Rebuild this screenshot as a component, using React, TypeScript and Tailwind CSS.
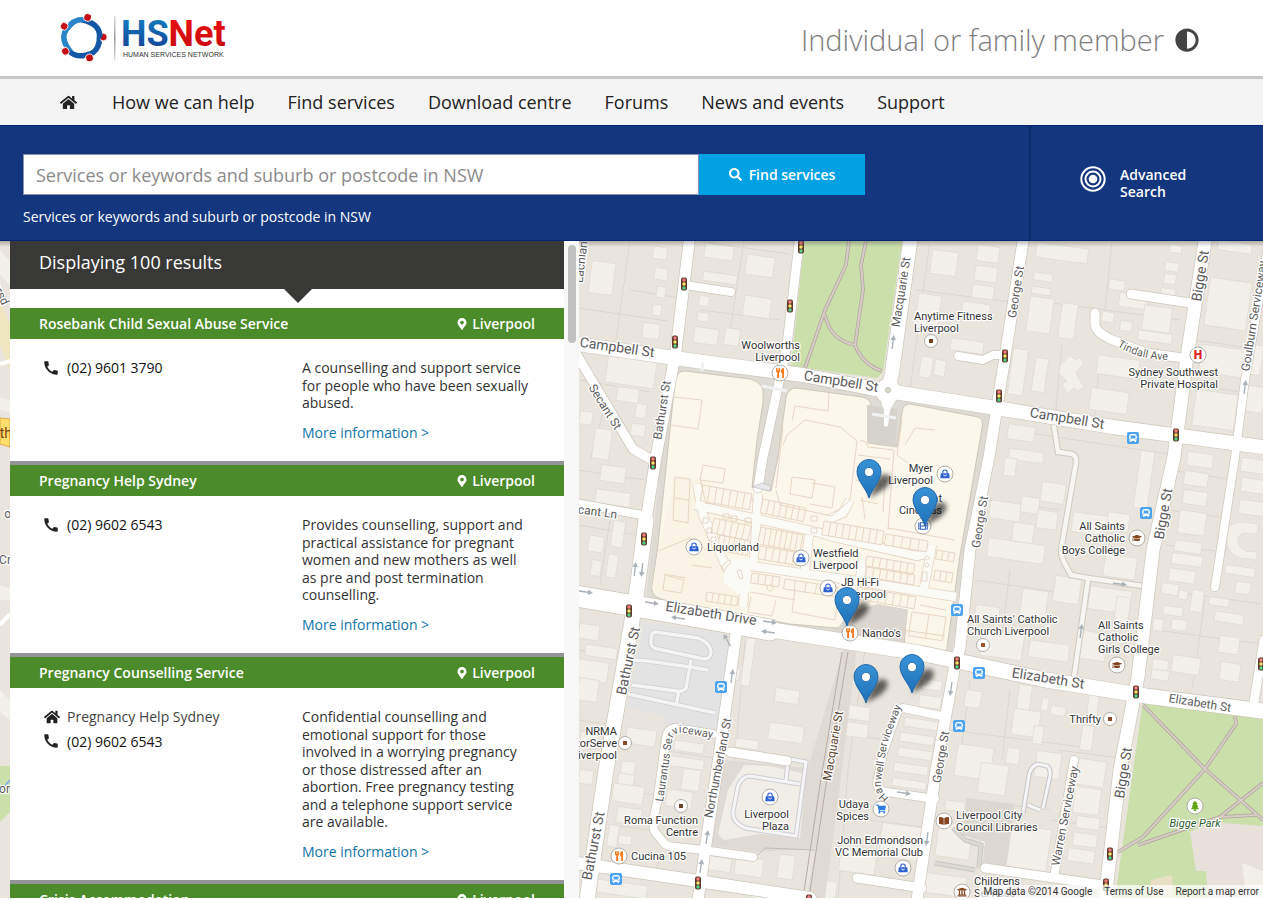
import React from "react";
import { FaAdjust, FaHome, FaMapMarkerAlt, FaSearch, FaUtensils, FaGraduationCap, FaShoppingCart, FaBookOpen, FaUniversity, FaTree, FaFilm, FaBus } from "react-icons/fa";
import { MdCall } from "react-icons/md";

/* ---------- map data ---------- */

type Road = { d: string; w: number };

const roads: Road[] = [
  { d: "M690 235 676 350 656 457 646 520", w: 11 },
  { d: "M646 520 638 583 631 627 606 770 587 900", w: 15 },
  { d: "M570 343 703 362 803 375 870 388 913 395 996 408 1113 427 1270 448", w: 14 },
  { d: "M800 235 787 345 763 457 758 488", w: 9 },
  { d: "M911 235 892 373 888 390", w: 14 },
  { d: "M1024 235 1005 357 989 457 970 550 960 647 954 670 936 770 917 900", w: 11 },
  { d: "M1206 235 1187 357 1174 457 1153 550 1138 677 1120 770 1105 900", w: 13 },
  { d: "M570 595 670 612 770 630", w: 21 },
  { d: "M765 629 920 653 1046 680 1146 696 1270 712", w: 15 },
  { d: "M574 350 633 449 652 460", w: 9 },
  { d: "M570 502 642 515", w: 8 },
  { d: "M737 628 730 677 717 770 707 837 698 900", w: 11 },
  { d: "M713 734 675 728Q667 729 666 738L657 803Q651 826 655 832L664 843Q667 847 677 847L703 850 753 857", w: 8 },
  { d: "M570 862 698 881 810 898", w: 12 },
  { d: "M730 752 787 761", w: 9 },
  { d: "M685 285 731 292", w: 8 },
  { d: "M1095 313V325Q1096 332 1110 339L1146 353 1183 358", w: 9 },
  { d: "M1131 294 1190 303", w: 9 },
  { d: "M958 356 983 360 993 355 1003 355", w: 8 },
  { d: "M1270 235 1245 380 1235 457 1215 587", w: 8 },
  { d: "M1264 640 1253 708", w: 9 },
  { d: "M1074 760 1055 872", w: 8 },
  { d: "M985 868 1103 885", w: 9 },
  { d: "M857 878 922 888", w: 9 },
  { d: "M941 716 903 708Q898 708 896 716L883 753 877 784Q878 791 887 792L935 799", w: 8 },
];

const lanes = [
  "M1053 420 1058 452 1072 454Q1077 456 1076 463L1061 550Q1061 556 1065 564L1071 575 1088 578 1150 587",
  "M1088 580 1074 677",
];

// centre x, centre y, width, height
const buildings: number[][] = [
  [602, 278, 24, 32], [660, 253, 14, 12], [661, 274, 13, 12], [661, 292, 9, 11], [657, 310, 9, 11], [651, 331, 17, 15],
  [719, 252, 29, 14], [720, 278, 34, 9], [760, 266, 28, 20], [757, 307, 27, 20], [704, 301, 10, 10], [703, 317, 11, 9], [706, 336, 24, 16], [732, 337, 15, 17],
  [631, 372, 49, 27], [628, 395, 22, 14], [641, 411, 11, 14], [638, 430, 14, 12], [586, 418, 13, 13], [602, 444, 17, 30],
  [613, 474, 25, 16], [613, 498, 35, 14], [618, 534, 12, 26], [596, 544, 15, 16], [596, 568, 10, 16], [612, 566, 10, 23],
  [944, 263, 26, 24], [988, 254, 22, 16], [986, 274, 22, 15], [983, 292, 22, 13], [976, 309, 28, 12], [928, 312, 23, 35], [967, 346, 33, 12], [926, 367, 12, 21], [940, 368, 11, 16],
  [1062, 253, 52, 15], [1043, 277, 19, 8], [1041, 291, 19, 7], [1040, 315, 24, 35], [1068, 321, 16, 35], [1018, 372, 15, 46], [1040, 375, 13, 34],
  [1117, 285, 16, 10], [1133, 301, 28, 14], [1157, 319, 28, 25], [1155, 337, 34, 10], [1108, 317, 12, 10], [1126, 326, 12, 10], [1118, 367, 42, 19], [1109, 401, 38, 22], [1172, 267, 14, 9], [1170, 279, 12, 10], [1168, 293, 15, 9], [1176, 249, 12, 8],
  [1228, 304, 42, 48], [1222, 361, 44, 28], [1215, 410, 42, 36], [1253, 399, 22, 26], [1255, 360, 14, 30], [1235, 247, 34, 10],
  [1021, 433, 27, 15], [1026, 456, 35, 11], [1010, 467, 12, 18], [1053, 493, 24, 20], [1005, 511, 31, 18], [1030, 505, 18, 16], [1047, 520, 20, 18], [1023, 533, 21, 19], [1016, 551, 57, 19], [1144, 480, 14, 58], [1090, 524, 36, 20], [1118, 522, 22, 18], [1120, 567, 32, 22],
  [1200, 460, 26, 14], [1196, 479, 24, 14], [1195, 498, 24, 14], [1192, 523, 27, 23], [1188, 547, 27, 11], [1187, 560, 31, 11], [1182, 576, 27, 13], [1254, 466, 26, 14], [1254, 486, 26, 14], [1252, 508, 26, 14], [1240, 571, 30, 9], [1243, 588, 15, 12],
  [1067, 590, 26, 26], [1110, 600, 42, 23], [1122, 612, 14, 30], [1034, 604, 26, 28], [987, 615, 24, 18], [1002, 645, 42, 26], [1049, 651, 40, 17], [1093, 646, 27, 28], [1170, 589, 17, 11], [1183, 595, 9, 9], [1197, 601, 12, 22], [1173, 611, 20, 9], [1179, 625, 15, 11], [1219, 602, 20, 8], [1229, 618, 29, 10], [1229, 645, 20, 17], [1160, 667, 16, 15], [1186, 665, 28, 17], [1230, 672, 20, 18], [1158, 625, 10, 12],
  [589, 632, 20, 15], [601, 652, 32, 11], [592, 671, 32, 20], [588, 690, 20, 22], [641, 737, 30, 16], [589, 740, 18, 15], [586, 777, 14, 14], [628, 768, 14, 13], [626, 780, 16, 12], [628, 794, 31, 18], [629, 816, 25, 16], [613, 836, 10, 22], [625, 840, 13, 9], [689, 747, 30, 10], [687, 763, 34, 10], [691, 780, 18, 21], [679, 799, 26, 17],
  [748, 662, 9, 48], [736, 674, 7, 12], [787, 696, 24, 14], [786, 733, 35, 17], [747, 744, 23, 9], [828, 749, 30, 8], [816, 806, 13, 14], [622, 889, 50, 13], [718, 864, 26, 14], [749, 867, 28, 18], [763, 891, 24, 16], [786, 867, 16, 24], [829, 891, 14, 20],
  [860, 678, 18, 14], [858, 713, 24, 14], [856, 730, 24, 14], [930, 702, 22, 12], [932, 685, 20, 10], [921, 724, 34, 9], [917, 739, 34, 9], [915, 754, 34, 9], [911, 769, 34, 9], [909, 784, 34, 8], [900, 842, 40, 34], [858, 860, 36, 26],
  [973, 699, 16, 17], [1024, 700, 13, 30], [1026, 723, 27, 26], [1045, 704, 7, 13], [1058, 711, 15, 9], [1038, 735, 10, 18], [1093, 705, 10, 26], [1087, 738, 12, 25], [974, 762, 36, 32], [993, 779, 28, 30], [1013, 756, 13, 16], [1048, 765, 25, 26], [1091, 773, 28, 26], [1087, 801, 26, 26], [1088, 823, 23, 12], [1085, 840, 24, 13], [1081, 856, 27, 13], [1028, 848, 42, 42], [989, 838, 16, 20], [954, 841, 34, 34], [955, 806, 20, 10], [1160, 675, 18, 10], [945, 885, 42, 20],
];

const parcels =
  "M630 241 616 340 M578 308 668 321 M700 241 760 250 790 254 M630 290 680 298 M744 241 728 345 M700 310 780 320 M580 380 650 392 M578 470 645 480 M608 395 590 460 M578 525 638 535 M610 520 600 585 M930 241 910 390 M916 290 1012 302 M1030 300 1180 320 M1112 241 1105 310 M1062 345 1055 418 M1100 358 1094 424 M1195 340 1262 350 M1190 385 1258 394 M1010 430 1175 455 M1170 470 1228 479 M1168 510 1228 518 M1166 545 1224 552 M1160 590 1262 604 M1156 630 1262 644 M1205 600 1192 690 M986 500 1060 510 M975 580 1070 594 M1010 570 1000 650 M578 650 632 658 M578 720 615 725 M620 790 655 795 M612 825 650 830 M660 750 715 758 M745 640 735 760 M865 650 848 770 838 900 M850 735 895 741 M870 820 930 828 M970 680 960 760 M950 730 1090 748 M1010 690 1002 760 M965 800 1050 810 M1058 750 1120 758 M1050 820 1110 828 M720 880 800 890 M660 860 655 870";

const signals: number[][] = [
  [684, 284], [675, 342], [801, 247], [790, 306], [653, 463], [644, 539], [629, 611], [1005, 356], [999, 396], [1176, 435],
  [957, 663], [1261, 664], [1136, 692], [1110, 854], [1106, 885], [698, 883], [809, 901],
];

const busStops: number[][] = [[1133, 438], [1146, 513], [957, 610], [979, 673], [959, 726], [721, 687], [616, 879]];

// x, y, rotation of an arrow pointing right
const arrows: number[][] = [
  [586, 592, 8], [652, 603, 8], [678, 618, 188], [770, 622, 8], [768, 632, 188], [635, 569, -84], [642, 570, 96], [727, 640, -120],
  [732, 676, -82], [707, 837, -82], [701, 866, -82], [893, 342, -83], [1245, 387, -83], [1120, 584, 6], [1081, 631, -83], [951, 689, 98], [927, 839, 98], [904, 793, 8],
];

type GlyphProps = { x?: number; y?: number; size?: number; color?: string };

function HandbagGlyph({ x = 0, y = 0, size = 10, color }: GlyphProps) {
  return (
    <svg x={x} y={y} width={size} height={size} viewBox="0 0 10 10">
      <path d="M.8 4.200H9.200L9.700 9.200H.3Z" fill={color} />
      <path d="M2.800 4.500V3.200A2.200 2.200 0 0 1 7.200 3.200V4.500" fill="none" stroke={color} strokeWidth="1.100" />
      <path d="M3.200 5.800Q5 8.300 6.800 5.800" fill="none" stroke="#fff" strokeWidth=".9" />
    </svg>
  );
}

type Poi = { x: number; y: number; icon?: React.ComponentType<GlyphProps>; fill: string };

const pois: Poi[] = [
  { x: 780, y: 373, icon: FaUtensils, fill: "#f57b20" },
  { x: 850, y: 633, icon: FaUtensils, fill: "#f57b20" },
  { x: 619, y: 856, icon: FaUtensils, fill: "#f57b20" },
  { x: 931, y: 341, fill: "#6b4226" },
  { x: 983, y: 645, fill: "#a0522d" },
  { x: 1110, y: 719, fill: "#8a4b2a" },
  { x: 625, y: 743, fill: "#8a4b2a" },
  { x: 681, y: 806, fill: "#6b4226" },
  { x: 694, y: 547, icon: HandbagGlyph, fill: "#2f62d0" },
  { x: 801, y: 558, icon: HandbagGlyph, fill: "#2f62d0" },
  { x: 828, y: 588, icon: HandbagGlyph, fill: "#2f62d0" },
  { x: 945, y: 474, icon: HandbagGlyph, fill: "#2f62d0" },
  { x: 770, y: 797, icon: HandbagGlyph, fill: "#2f62d0" },
  { x: 903, y: 868, icon: HandbagGlyph, fill: "#2f62d0" },
  { x: 923, y: 526, icon: FaFilm, fill: "#2f62d0" },
  { x: 881, y: 809, icon: FaShoppingCart, fill: "#2f7de0" },
  { x: 1137, y: 538, icon: FaGraduationCap, fill: "#84451f" },
  { x: 1117, y: 665, icon: FaGraduationCap, fill: "#84451f" },
  { x: 944, y: 821, icon: FaBookOpen, fill: "#84451f" },
  { x: 962, y: 892, icon: FaUniversity, fill: "#84451f" },
  { x: 1195, y: 806, icon: FaTree, fill: "#5fa510" },
];

type Label = { x: number; y: number; lines: string[]; end?: boolean };

const poiLabels: Label[] = [
  { x: 800, y: 349, lines: ["Woolworths", "Liverpool"], end: true },
  { x: 914, y: 320, lines: ["Anytime Fitness", "Liverpool"] },
  { x: 1218, y: 376, lines: ["Sydney Southwest", "Private Hospital"], end: true },
  { x: 933, y: 472, lines: ["Myer", "Liverpool"], end: true },
  { x: 942, y: 502, lines: ["Event", "Cinemas"], end: true },
  { x: 707, y: 551, lines: ["Liquorland"] },
  { x: 813, y: 557, lines: ["Westfield", "Liverpool"] },
  { x: 841, y: 586, lines: ["JB Hi-Fi", "Liverpool"] },
  { x: 862, y: 637, lines: ["Nando's"] },
  { x: 1125, y: 530, lines: ["All Saints", "Catholic", "Boys College"], end: true },
  { x: 967, y: 623, lines: ["All Saints' Catholic", "Church Liverpool"] },
  { x: 1098, y: 629, lines: ["All Saints", "Catholic", "Girls College"] },
  { x: 1101, y: 723, lines: ["Thrifty"], end: true },
  { x: 617, y: 735, lines: ["NRMA", "MotorServe", "Liverpool"], end: true },
  { x: 698, y: 824, lines: ["Roma Function", "Centre"], end: true },
  { x: 789, y: 818, lines: ["Liverpool", "Plaza"], end: true },
  { x: 631, y: 860, lines: ["Cucina 105"] },
  { x: 869, y: 808, lines: ["Udaya", "Spices"], end: true },
  { x: 923, y: 844, lines: ["John Edmondson", "VC Memorial Club"], end: true },
  { x: 956, y: 819, lines: ["Liverpool City", "Council Libraries"] },
  { x: 974, y: 885, lines: ["Childrens", "Services"] },
];

type StreetLabel = { x: number; y: number; a: number; t: string; big?: boolean; fill?: string };

const streetLabels: StreetLabel[] = [
  { x: 617, y: 348, a: 8, t: "Campbell St", big: true },
  { x: 841, y: 382, a: 9, t: "Campbell St", big: true },
  { x: 1067, y: 419, a: 9, t: "Campbell St", big: true },
  { x: 711, y: 614, a: 9, t: "Elizabeth Drive", big: true },
  { x: 1048, y: 679, a: 9, t: "Elizabeth St", big: true },
  { x: 1200, y: 703, a: 9, t: "Elizabeth St" },
  { x: 901, y: 292, a: -81, t: "Macquarie St" },
  { x: 1016, y: 292, a: -81, t: "George St" },
  { x: 1201, y: 276, a: -81, t: "Bigge St", big: true },
  { x: 662, y: 410, a: -81, t: "Bathurst St" },
  { x: 629, y: 661, a: -78, t: "Bathurst St", big: true },
  { x: 594, y: 846, a: -79, t: "Bathurst St", big: true },
  { x: 980, y: 522, a: -81, t: "George St" },
  { x: 1164, y: 514, a: -80, t: "Bigge St", big: true },
  { x: 941, y: 757, a: -80, t: "George St" },
  { x: 1124, y: 773, a: -81, t: "Bigge St", big: true },
  { x: 718, y: 768, a: -79, t: "Northumberland St" },
  { x: 833, y: 746, a: -80, t: "Macquarie St", fill: "#5a4632" },
  { x: 1065, y: 816, a: -79, t: "Warren Serviceway" },
  { x: 1254, y: 316, a: -81, t: "Goulburn Serviceway" },
  { x: 605, y: 407, a: 58, t: "Secant St" },
  { x: 591, y: 511, a: 8, t: "Secant Ln" },
  { x: 581, y: 262, a: -83, t: "Lachlan" },
];

const pins: number[][] = [[869, 498], [925, 526], [866, 703], [912, 693], [847, 626]];

// start, end, depth and number of units of a run of shops
const shopRuns: number[][] = [
  [703, 485, 752, 494, 16, 7], [714, 518, 751, 526, 15, 6], [720, 535, 750, 541, 15, 6],
  [763, 499, 806, 508, 14, 7], [761, 527, 803, 535, 17, 8], [760, 546, 801, 553, 13, 6],
  [824, 521, 884, 531, 14, 9], [886, 534, 928, 541, 11, 5], [867, 556, 915, 564, 10, 7], [867, 567, 915, 575, 10, 7],
  [752, 573, 780, 577, 10, 4], [785, 579, 838, 587, 10, 5], [858, 587, 916, 597, 12, 8], [935, 570, 953, 573, 10, 3],
  [912, 612, 946, 617, 24, 2], [707, 592, 738, 597, 9, 5], [937, 550, 955, 553, 9, 3],
];

function shopPath([x1, y1, x2, y2, depth, n]: number[]) {
  const len = Math.hypot(x2 - x1, y2 - y1);
  const nx = (-(y2 - y1) / len) * depth;
  const ny = ((x2 - x1) / len) * depth;
  let d = `M${x1} ${y1}L${x2} ${y2}L${x2 + nx} ${y2 + ny}L${x1 + nx} ${y1 + ny}Z`;
  for (let i = 1; i < n; i++) {
    const x = x1 + ((x2 - x1) * i) / n;
    const y = y1 + ((y2 - y1) * i) / n;
    d += `M${x} ${y}l${nx} ${ny}`;
  }
  return d;
}

function Pin({ x, y }: { x: number; y: number }) {
  return (
    <g transform={`translate(${x} ${y})`}>
      <path d="M0 0 7-18Q13-26 20-23 25-17 14-8Z" fill="#000" opacity=".6" filter="url(#pinShadow)" />
      <path d="M0 0C-2.500-9-12-17-12-26.500A12 12 0 0 1 12-26.500C12-17 2.500-9 0 0Z" fill="url(#pinFill)" stroke="#2367a8" strokeWidth="1" />
      <circle cy="-26" r="4.600" fill="#fff" stroke="#2367a8" strokeWidth=".8" />
    </g>
  );
}

function StreetMap() {
  return (
    <svg
      viewBox="0 241 1263 657"
      preserveAspectRatio="xMinYMin slice"
      className="absolute inset-0 h-full w-full bg-[#e9e5dd] font-['Roboto','Liberation_Sans',sans-serif]"
      role="img"
      aria-label="Map of Liverpool"
    >
      <defs>
        <linearGradient id="pinFill" x1="0" y1="0" x2="0" y2="1">
          <stop offset="0" stopColor="#3a93d6" />
          <stop offset="1" stopColor="#1f70b8" />
        </linearGradient>
        <filter id="pinShadow" x="-50%" y="-50%" width="200%" height="200%">
          <feGaussianBlur stdDeviation="2.6" />
        </filter>
        <linearGradient id="topShade" x1="0" y1="0" x2="0" y2="1">
          <stop offset="0" stopColor="#444" stopOpacity=".35" />
          <stop offset="1" stopColor="#444" stopOpacity="0" />
        </linearGradient>
        <path id="tindall" d="M1117 346Q1140 361 1175 360" />
        <path id="laurantus" d="M663 802 672 741Q674 731 684 733L722 740" />
        <path id="hanwell" d="M889 798Q880 791 881 782L887 744 906 694" />
      </defs>

      <path d={parcels} fill="none" stroke="#dcd7ce" />

      <g fill="#f3f0ea" stroke="#e0dcd3" strokeWidth=".8">
        {buildings.map(([x, y, w, h], i) => (
          <rect key={i} x={x - w / 2} y={y - h / 2} width={w} height={h} transform={`rotate(8 ${x} ${y})`} />
        ))}
        <path d="M1227 545V530Q1230 523 1240 522L1258 524 1257 534 1243 533Q1237 536 1238 543 1240 549 1246 551L1257 552V560L1240 558Q1229 554 1227 545Z" />
        <path d="m1060 366 10-11 5 5 4-2 5 5-8 10 8 14-7 4-3-3-7 6-5-10 5-3-8-7Z" />
      </g>

      {/* parks */}
      <path d="M805 235H903L883 372 877 378 791 366Z" fill="#cbdfab" />
      <path d="M1143 700 1263 719V898H1115Z" fill="#cbdfab" />
      <path d="M1190 832 1212 822 1263 826V898H1208L1206 871 1196 871Z" fill="#e7e1da" />
      <path d="m1151 880 21-5 1 23h-25Z" fill="#e9dfc5" />
      <path d="m1242 863 21 8v27h-17Z" fill="#f3f0ea" />
      <g fill="none" strokeLinejoin="round">
        {["#aea29a", "#d8ccc6"].map((c, i) => (
          <path
            key={c}
            stroke={c}
            strokeWidth={i === 0 ? 3.6 : 2.2}
            d="M849 241 846 265 825 310 805 368M866 241 861 265 863 290 855 345Q830 340 825 315M855 345Q863 365 882 371M1143 705 1205 769 1263 820M1235 716 1236 724 1205 769 1143 837 1118 852M1138 845 1220 817 1256 815M1220 817 1263 783"
          />
        ))}
      </g>

      {/* car park */}
      <path d="M644 622 720 633 730 648 722 712 717 729 665 724 666 716 627 708Z" fill="#e3e3e4" />
      <g fill="none">
        {["#cfcfd2", "#f4f4f5"].map((c, i) => (
          <path
            key={c}
            stroke={c}
            strokeWidth={i === 0 ? 5 : 3.4}
            d="M655 632 698 638Q711 643 711 653 710 659 704 659L658 649Q650 648 651 641 651 632 655 632ZM632 660 648 661 690 667 708 670M691 660 686 688Q684 692 676 691L632 685M679 690 676 706M628 694 715 713"
          />
        ))}
      </g>

      {/* plaza precinct and former Macquarie St */}
      <path d="M724 760 808 768 846 640 858 640 842 770 825 898H806L816 848 757 852 708 845Z" fill="#dfdad4" />
      <path d="M744 765 770 766 806 774 800 838 760 834 724 840 718 834 728 790Z" fill="#f1eee8" />
      <g fill="none">
        <path d="M750 776 800 784M788 762 786 781M790 759 806 762 796 836 745 828Q732 822 733 812L738 786Q742 776 750 776" stroke="#cdcdd2" strokeWidth="5" />
        <path d="M750 776 800 784M788 762 786 781M790 759 806 762 796 836 745 828Q732 822 733 812L738 786Q742 776 750 776" stroke="#f5f5f7" strokeWidth="3" />
      </g>
      <path d="M848 652 826 785 809 898M842 652 820 785 803 898" fill="none" stroke="#b7aca3" />
      <path d="M755 858 765 848 815 850" fill="none" stroke="#c3bbb3" />
      <path d="M967 798 1015 804 1006 870 983 862 985 842 962 835Z" fill="#dcd8cf" />
      <path d="M1028 805 1040 810M1023 813 1029 775Q1031 766 1038 764L1047 766Q1051 769 1050 776L1043 808M935 863 975 870M953 828 965 840 981 845 979 868" fill="none" stroke="#c5c5c9" strokeWidth="5" />
      <path d="M1028 805 1040 810M1023 813 1029 775Q1031 766 1038 764L1047 766Q1051 769 1050 776L1043 808" fill="none" stroke="#f4f4f6" strokeWidth="3" />
      <path d="M935 863 975 870M953 828 965 840 981 845 979 868" fill="none" stroke="#ddd9d0" strokeWidth="3" />

      {/* shopping centre */}
      <path d="M672 358 870 390 905 398 996 410 950 662 770 632 645 608Z" fill="#dedbd5" />
      <path
        d="M675 382Q676 371 685 371L750 379Q761 382 763 390V402L757 440 752 487 771 491 778 457 786 398Q788 388 796 388L862 397Q871 399 871 406L868 443 897 447 902 412Q903 404 910 404L978 417Q984 419 982 428L960 555 946 654 904 647 907 610 878 605 871 620 836 628 790 624 700 607 662 599Q652 597 652 588L658 545Z"
        fill="#fbf7eb"
        stroke="#c6bfae"
        strokeWidth=".8"
      />
      <path d="M867 405 897 409 896 447 867 442Z" fill="#d6d2cc" />
      <path d="M878 604 908 610 903 646 836 632 848 612Z" fill="#dcd6d0" />
      <path d="M675 477 706 482 703 504 712 530 735 575 745 590 742 612 700 607 662 599 652 588 658 551Z" fill="#faf4e6" />
      <g fill="none" stroke="#e6d4c1" strokeWidth="1">
        <path d="M697 484 703 515 729 573M695 505 757 519 817 532 833 537 917 556 934 552M737 564 800 573 850 580 956 597M758 494 754 562M745 580 743 607M809 535 805 570M863 560 860 578M932 545 924 588M827 520 843 513 850 500" strokeWidth="10" />
        <path d="M697 484 703 515 729 573M695 505 757 519 817 532 833 537 917 556 934 552M737 564 800 573 850 580 956 597M758 494 754 562M745 580 743 607M809 535 805 570M863 560 860 578M932 545 924 588M827 520 843 513 850 500" stroke="#fafaf7" strokeWidth="8.400" />
      </g>
      <path d="M724 560 750 558 751 592 738 594 724 582Z" fill="#fafaf7" />
      <g fill="none" stroke="#e5d3c0" strokeWidth=".9">
        {shopRuns.map((r, i) => (
          <path key={i} d={shopPath(r)} fill="#fbf6ea" />
        ))}
        <path d="M675 477 690 479 688 523 673 520ZM675 498 689 500M673 397 702 400 698 429 671 425M658 551 690 538 706 550M664 574 686 578M692 565 712 568M665 575 684 580 681 593 663 590ZM703 465 725 469 723 483 700 480Z" />
        <path d="M795 406 828 411 829 393M795 406 792 421M783 445 787 435 805 420 840 427 857 441 850 500 832 516 780 505 776 490M792 477 815 480 812 498 790 494ZM812 483 835 487 832 508 810 504M783 427 776 488" />
        <path d="M860 440 866 442 868 447 894 450 888 530M905 445 915 428 935 430M858 455 890 459M855 480 882 485M862 497 865 519M902 420 897 455 918 470M885 480 883 512M888 528 955 540M750 592 795 600M795 590 792 612 835 620 838 595M751 597 748 612 772 616 776 600M903 630 945 636M860 500 878 504M920 605 946 610M705 500 700 478" />
        <path d="M703 518h5v5h-5ZM707 528h5v5h-5ZM711 537h5v5h-5ZM723 514h6v5h-6ZM731 516h6v5h-6ZM745 518h6v5h-6ZM811 516h6v5h-6ZM811 528h6v5h-6ZM737 571l3 8 3-1-2-8ZM722 567q5-7 8-7l1 3q-5 3-7 8Z" />
        <path d="M927 556a2 2 0 1 0 .1 0M927 563a2 2 0 1 0 .1 0M922 572h5v9h-5ZM752 498a1.500 1.500 0 1 0 .1 0M770 585a3 3 0 1 0 .1 0" />
      </g>

      {/* minor lanes */}
      {lanes.map((d) => (
        <path key={d} d={d} fill="none" stroke="#cfc9c0" strokeWidth="6.500" />
      ))}
      {lanes.map((d) => (
        <path key={d} d={d} fill="none" stroke="#f7f5f1" strokeWidth="4.500" />
      ))}

      {/* roads: casing, then surface */}
      {roads.map((r) => (
        <path key={r.d} d={r.d} fill="none" stroke="#cdc7bb" strokeWidth={r.w + 1.4} strokeLinecap="round" strokeLinejoin="round" />
      ))}
      <circle cx="888" cy="391" r="13" fill="#fff" stroke="#cdc7bb" />
      {roads.map((r) => (
        <path key={r.d} d={r.d} fill="none" stroke="#fff" strokeWidth={r.w} strokeLinecap="round" strokeLinejoin="round" />
      ))}
      <circle cx="888" cy="390" r="2.600" fill="#dcd7cc" stroke="#bdb7ab" strokeWidth=".8" />
      <path d="M880 398 884 410V425Q885 428 888 426L890 410 897 398Z" fill="#fff" />
      <path d="M703 362 702 371M762 386 787 391M872 414 896 418" fill="none" stroke="#f0f2f4" strokeWidth="3" />
      <path d="M752 487 770 491 771 486 762 483Z" fill="#e8e8ea" stroke="#b9b9bb" strokeWidth=".6" />

      {/* strip left of the results */}
      <path d="M0 300 10 325V370L0 345Z" fill="#efe5bf" />
      <path d="M0 418 10 419V447L0 444Z" fill="#ffdf6b" stroke="#e3a94c" />
      <path d="M0 364 10 361M0 625 10 614" stroke="#fff" strokeWidth="4" />
      <path d="M0 766H10V812L0 822Z" fill="#cbdfab" />
      <path d="M0 792 10 780" stroke="#7da7f0" strokeWidth="1.500" />
      <path d="M0 250 10 262V285L0 275ZM0 398 10 400V412L0 410ZM0 585 10 588V600H0ZM0 690 10 700V720L0 712Z" fill="#f3f0ea" />

      {arrows.map(([x, y, a]) => (
        <path key={`${x}-${y}`} d="M-7-.7H2V-2.800L7 0 2 2.800V.7H-7Z" fill="#a9b2b9" transform={`translate(${x} ${y}) rotate(${a})`} />
      ))}

      <g fill="#5c5c5c" stroke="#fff" strokeWidth="2.400" strokeLinejoin="round" paintOrder="stroke" textAnchor="middle">
        {streetLabels.map((s) => (
          <text key={`${s.x}-${s.y}`} transform={`translate(${s.x} ${s.y}) rotate(${s.a})`} fontSize={s.big ? 14 : 12} dy="4" fill={s.fill}>
            {s.t}
          </text>
        ))}
        <g fontSize="11" textAnchor="start">
          <text><textPath href="#tindall">Tindall Ave</textPath></text>
          <text><textPath href="#laurantus">Laurantus Serviceway</textPath></text>
          <text><textPath href="#hanwell">Hanwell Serviceway</textPath></text>
        </g>
        <g fontSize="12" textAnchor="end">
          <text x="11" y="518">o</text>
          <text x="11" y="564">Cr</text>
          <text x="10" y="793">or</text>
          <text transform="translate(2 306) rotate(65)">Marsd</text>
          <text x="12" y="438" fill="#7a3b10" stroke="none" fontSize="14">th</text>
        </g>
      </g>

      {signals.map(([x, y]) => (
        <g key={`${x}-${y}`} transform={`translate(${x} ${y})`}>
          <rect x="-3" y="-6.500" width="6" height="13" rx="2" fill="#5f3a2c" />
          <circle cy="-4" r="1.700" fill="#f57f7f" />
          <circle r="1.700" fill="#f7e36a" />
          <circle cy="4" r="1.700" fill="#4fd28a" />
        </g>
      ))}

      {busStops.map(([x, y]) => (
        <g key={`${x}-${y}`} transform={`translate(${x} ${y})`}>
          <rect x="-6" y="-6" width="12" height="12" rx="2" fill="#4ba3f2" />
          <FaBus x="-4" y="-4" size={8} color="#fff" />
        </g>
      ))}

      {pois.map(({ x, y, icon: Icon, fill }) => (
        <g key={`${x}-${y}`}>
          <circle cx={x} cy={y} r={Icon ? 8 : 6.5} fill="#fff" stroke="#a9a6a1" strokeWidth=".9" />
          {Icon ? <Icon x={x - 5} y={y - 5} size={10} color={fill} /> : <rect x={x - 2} y={y - 2} width="4" height="4" fill={fill} />}
        </g>
      ))}
      <circle cx="1198" cy="355" r="8" fill="#fff" stroke="#a9a6a1" strokeWidth=".9" />
      <text x="1198" y="359" textAnchor="middle" fontSize="12" fontWeight="900" fill="#e02020">H</text>

      <g fill="#333" stroke="#fff" strokeWidth="2.400" strokeLinejoin="round" paintOrder="stroke" fontSize="11">
        {poiLabels.map((l) => (
          <text key={l.lines.join() + l.x} textAnchor={l.end ? "end" : "start"}>
            {l.lines.map((t, i) => (
              <tspan key={t} x={l.x} y={l.y + i * 12}>{t}</tspan>
            ))}
          </text>
        ))}
        <text x="1195" y="827" textAnchor="middle" fill="#2c5c2c" fontStyle="italic">Bigge Park</text>
      </g>

      {pins.map(([x, y]) => (
        <Pin key={`${x}-${y}`} x={x} y={y} />
      ))}
      <rect y="241" width="1263" height="6" fill="url(#topShade)" />
    </svg>
  );
}

/* ---------- page ---------- */

function Logo() {
  return (
    <svg width="174" height="56" viewBox="57 9 174 56" role="img" aria-label="HSNet Human Services Network">
      <defs>
        <linearGradient id="blue" x1="0" y1="0" x2="0" y2="1">
          <stop offset="0" stopColor="#1584c4" />
          <stop offset="1" stopColor="#123a90" />
        </linearGradient>
        <linearGradient id="red" x1="0" y1="0" x2="0" y2="1">
          <stop offset="0" stopColor="#f01111" />
          <stop offset="1" stopColor="#c1090f" />
        </linearGradient>
        <linearGradient id="rule" x1="0" y1="0" x2="0" y2="1">
          <stop offset="0" stopColor="#ddd" />
          <stop offset=".5" stopColor="#999" />
          <stop offset="1" stopColor="#ddd" />
        </linearGradient>
      </defs>
      {[0, 72, 144, 216, 288].map((a) => (
        <g key={a} transform={`translate(82 37) rotate(${a})`}>
          <path d="M8.500 19Q18 15 20 4.500L14.500-7Q15.500 4 12.500 9 9.500 14 1.500 17Z" fill={a > 100 && a < 250 ? "#2a86c8" : "#1457a6"} />
          <circle cx="21.300" cy="-1" r="3.800" fill="#c20d14" stroke="#fff" strokeWidth=".8" />
        </g>
      ))}
      <rect x="114" y="15" width="1.500" height="44" fill="url(#rule)" />
      <text x="121" y="45" fontSize="36" fontWeight="700" className="font-['Roboto','Liberation_Sans',sans-serif]">
        <tspan fill="url(#blue)">HS</tspan>
        <tspan fill="url(#red)">Net</tspan>
      </text>
      <text x="123" y="56" fontSize="7" fill="#333" className="font-['Liberation_Sans',sans-serif]">HUMAN SERVICES NETWORK</text>
    </svg>
  );
}

function TargetIcon() {
  return (
    <svg width="26" height="26" viewBox="0 0 26 26" fill="none" stroke="#fff" strokeWidth="2" aria-hidden="true">
      <circle cx="13" cy="13" r="11.700" />
      <circle cx="13" cy="13" r="7.500" />
      <circle cx="13" cy="13" r="4.300" fill="#fff" stroke="none" />
    </svg>
  );
}

type Result = { name: string; place: string; org?: string; phone: string; text: string };

const results: Result[] = [
  { name: "Rosebank Child Sexual Abuse Service", place: "Liverpool", phone: "(02) 9601 3790", text: "A counselling and support service for people who have been sexually abused." },
  { name: "Pregnancy Help Sydney", place: "Liverpool", phone: "(02) 9602 6543", text: "Provides counselling, support and practical assistance for pregnant women and new mothers as well as pre and post termination counselling." },
  { name: "Pregnancy Counselling Service", place: "Liverpool", org: "Pregnancy Help Sydney", phone: "(02) 9602 6543", text: "Confidential counselling and emotional support for those involved in a worrying pregnancy or those distressed after an abortion. Free pregnancy testing and a telephone support service are available." },
  { name: "Crisis Accommodation", place: "Liverpool", phone: "(02) 9602 6543", text: "" },
];

function ResultItem({ r }: { r: Result }) {
  return (
    <li className="border-b-4 border-[#939497]">
      <div className="flex h-[31px] items-center justify-between bg-[#4b8b29] px-[29px] font-semibold text-white">
        <h3>{r.name}</h3>
        <span className="flex items-center gap-1">
          <FaMapMarkerAlt size={12} aria-hidden="true" />
          {r.place}
        </span>
      </div>
      <div className="grid grid-cols-[260px_1fr] pt-5 pr-[29px] pb-5 pl-8 leading-tight">
        <ul className="space-y-[7px] text-[#111]">
          {r.org && (
            <li className="flex items-center gap-[7px] text-[#444]">
              <span className="flex w-[18px] justify-end text-[#222]"><FaHome size={16} aria-hidden="true" /></span>
              {r.org}
            </li>
          )}
          <li className="flex items-center gap-[7px]">
            <MdCall size={18} className="-my-1 text-[#222]" aria-hidden="true" />
            {r.phone}
          </li>
        </ul>
        <div className="max-w-[230px] text-[#333]">
          <p>{r.text}</p>
          <a href="#more" className="mt-3 block text-[#0f75a8]">More information &gt;</a>
        </div>
      </div>
    </li>
  );
}

const navItems = ["How we can help", "Find services", "Download centre", "Forums", "News and events", "Support"];

export default function App() {
  return (
    <div className="flex h-screen flex-col bg-white pb-0.5 font-['Open_Sans','Noto_Sans',sans-serif] text-sm">
      <header className="flex h-[79px] shrink-0 items-center justify-between border-b-[3px] border-[#c6c8c6] pr-16 pl-[57px]">
        <a href="#home"><Logo /></a>
        <div className="flex items-center gap-[11px] pt-1 text-[29px] leading-9 font-light text-[#7d7d7d]">
          Individual or family member
          <button type="button" aria-label="Toggle contrast" className="text-[#444]">
            <FaAdjust size={24} />
          </button>
        </div>
      </header>

      <nav className="flex h-[46px] shrink-0 items-center gap-[33px] bg-[#f4f4f4] pl-[60px] text-lg text-[#222]">
        <a href="#home" aria-label="Home" className="pr-0.5"><FaHome size={17} /></a>
        {navItems.map((n) => (
          <a key={n} href="#nav">{n}</a>
        ))}
      </nav>

      <div className="flex h-[116px] shrink-0 border-y border-[#06246f] bg-[#13367e] text-white">
        <form className="flex-1 pt-7 pl-[23px]" onSubmit={(e) => e.preventDefault()}>
          <div className="flex h-[41px] w-[842px]">
            <input
              id="q"
              type="text"
              placeholder="Services or keywords and suburb or postcode in NSW"
              className="min-w-0 flex-1 border border-[#8a94b0] bg-white px-3 text-lg text-[#333] outline-none placeholder:text-[#8b8b8b]"
            />
            <button type="submit" className="flex w-[166px] items-center justify-center gap-[7px] bg-[#00a2e3] font-semibold">
              <FaSearch size={13} aria-hidden="true" />
              Find services
            </button>
          </div>
          <label htmlFor="q" className="mt-3 block leading-5">Services or keywords and suburb or postcode in NSW</label>
        </form>
        <a href="#advanced" className="flex w-[234px] items-center gap-3.5 border-l-2 border-[#0c2b6b] pb-2 pl-[49px] leading-tight font-semibold">
          <TargetIcon />
          <span className="w-20 pt-2">Advanced Search</span>
        </a>
      </div>

      <main className="relative min-h-0 flex-1 overflow-hidden">
        <StreetMap />
        <section aria-label="Results" className="relative ml-2.5 flex h-full w-[569px] max-w-full bg-white">
          <div className="min-w-0 flex-1 overflow-y-auto [scrollbar-width:none]">
            <h2 className="relative h-12 bg-[#383936] px-[29px] pt-1.5 text-lg leading-[30px] font-medium text-white">
              Displaying 100 results
              <svg width="28" height="14" viewBox="0 0 28 14" className="absolute top-full left-[274px]" aria-hidden="true">
                <path d="M0 0H28L14 14Z" fill="#383936" />
              </svg>
            </h2>
            <ul className="mt-[19px]">
              {results.map((r) => (
                <ResultItem key={r.name} r={r} />
              ))}
            </ul>
          </div>
          <div className="w-[15px] bg-[#f8f8f9] px-1 pt-1">
            <div className="h-[98px] w-2 rounded-full bg-[#c1c1c1]" />
          </div>
        </section>
        <div className="absolute right-0 bottom-0 flex gap-3 bg-white/70 px-1 font-['Roboto','Liberation_Sans',sans-serif] text-[10px] leading-[13px] text-[#333]">
          <span>Map data ©2014 Google</span>
          <a href="#terms">Terms of Use</a>
          <a href="#report">Report a map error</a>
        </div>
      </main>
    </div>
  );
}
